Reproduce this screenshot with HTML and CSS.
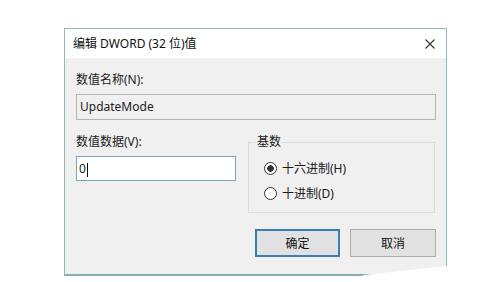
FILE: index.html
```html
<!DOCTYPE html>
<html lang="zh-CN">
<head>
    <meta charset="UTF-8">
    <meta name="viewport" content="width=device-width, initial-scale=1.0">
    <title>编辑 DWORD (32 位)值</title>
    <link rel="stylesheet" href="styles.css">
</head>
<body>
    <div class="page">
        <div class="dialog">
            <div class="titlebar">
                <span class="title">编辑 DWORD (32 位)值</span>
                <svg class="close" width="10" height="10" viewBox="0 0 10 10">
                    <path d="M0.5 0.5 L9.5 9.5 M9.5 0.5 L0.5 9.5" stroke="#333" stroke-width="1.1" fill="none"/>
                </svg>
            </div>
            <div class="body">
                <div class="label">数值名称(N):</div>
                <div class="field readonly">UpdateMode</div>
                <div class="row">
                    <div class="col">
                        <div class="label">数值数据(V):</div>
                        <div class="field edit">0<span class="caret"></span></div>
                    </div>
                    <fieldset class="base">
                        <legend>基数</legend>
                        <div class="radio"><span class="dot checked"></span>十六进制(H)</div>
                        <div class="radio second"><span class="dot"></span>十进制(D)</div>
                    </fieldset>
                </div>
                <div class="buttons">
                    <button class="btn default">确定</button>
                    <button class="btn">取消</button>
                </div>
            </div>
        </div>
    </div>
    <div class="smudge"></div>
</body>
</html>
```

FILE: styles.css
```css
* {
    margin: 0;
    padding: 0;
    box-sizing: border-box;
    font-family: "Noto Sans", "Noto Sans CJK SC", sans-serif;
}

body {
    background: #fff;
    width: 493px;
    height: 282px;
    overflow: hidden;
    position: relative;
    color: #1a1a1a;
}

.page {
    padding: 28px 0 0 64px;
}

.dialog {
    width: 383px;
    height: 248px;
    border: 1px solid #93b8bc;
    border-bottom: 2px solid #86adb0;
    background: #f0f0f0;
}

.titlebar {
    height: 29px;
    background: #fff;
    display: flex;
    align-items: center;
    justify-content: space-between;
    padding: 0 11px 0 8px;
}

.title {
    font-size: 12px;
    line-height: 16px;
    color: #111;
}

.body {
    padding: 14px 10px 0 11px;
}

.label {
    font-size: 12px;
    line-height: 16px;
}

.field {
    margin-top: 6px;
    font-size: 12px;
    padding-left: 3px;
}

.readonly {
    height: 26px;
    line-height: 24px;
    border: 1px solid #b4b4b4;
    background: #f0f0f0;
    color: #222;
}

.edit {
    height: 25px;
    line-height: 23px;
    border: 1px solid #7da2ba;
    background: #fff;
    padding-left: 2px;
}

.caret {
    display: inline-block;
    width: 1px;
    height: 14px;
    background: #000;
    vertical-align: middle;
    margin-left: 1px;
}

.row {
    display: grid;
    grid-template-columns: 160px 187px;
    column-gap: 12px;
    margin-top: 14px;
    align-items: start;
}

.base {
    margin: 0;
    border: 1px solid #dcdcdc;
    padding: 10px 0 11px 0;
}

.base legend {
    font-size: 12px;
    line-height: 16px;
    margin-left: 7px;
    padding: 0 1px;
}

.radio {
    display: flex;
    align-items: center;
    height: 16px;
    margin-left: 15px;
    font-size: 12px;
    gap: 5px;
}

.radio.second {
    margin-top: 9px;
}

.dot {
    width: 13px;
    height: 13px;
    border: 1px solid #333;
    border-radius: 50%;
    background: #fff;
}

.dot.checked {
    background: radial-gradient(circle, #333 0 3px, #fff 3.6px);
}

.buttons {
    display: flex;
    justify-content: flex-end;
    gap: 10px;
    margin-top: 16px;
}

.btn {
    width: 86px;
    height: 28px;
    background: #e1e1e1;
    border: 1px solid #adadad;
    font-size: 12px;
    color: #111;
}

.btn.default {
    width: 85px;
    border: 2px solid #3a7fb4;
}

.smudge {
    position: absolute;
    left: 0;
    top: 0;
    width: 493px;
    height: 282px;
    background: #fff;
    clip-path: polygon(352px 282px, 364px 275px, 448px 266px, 493px 262px, 493px 282px);
}
```
